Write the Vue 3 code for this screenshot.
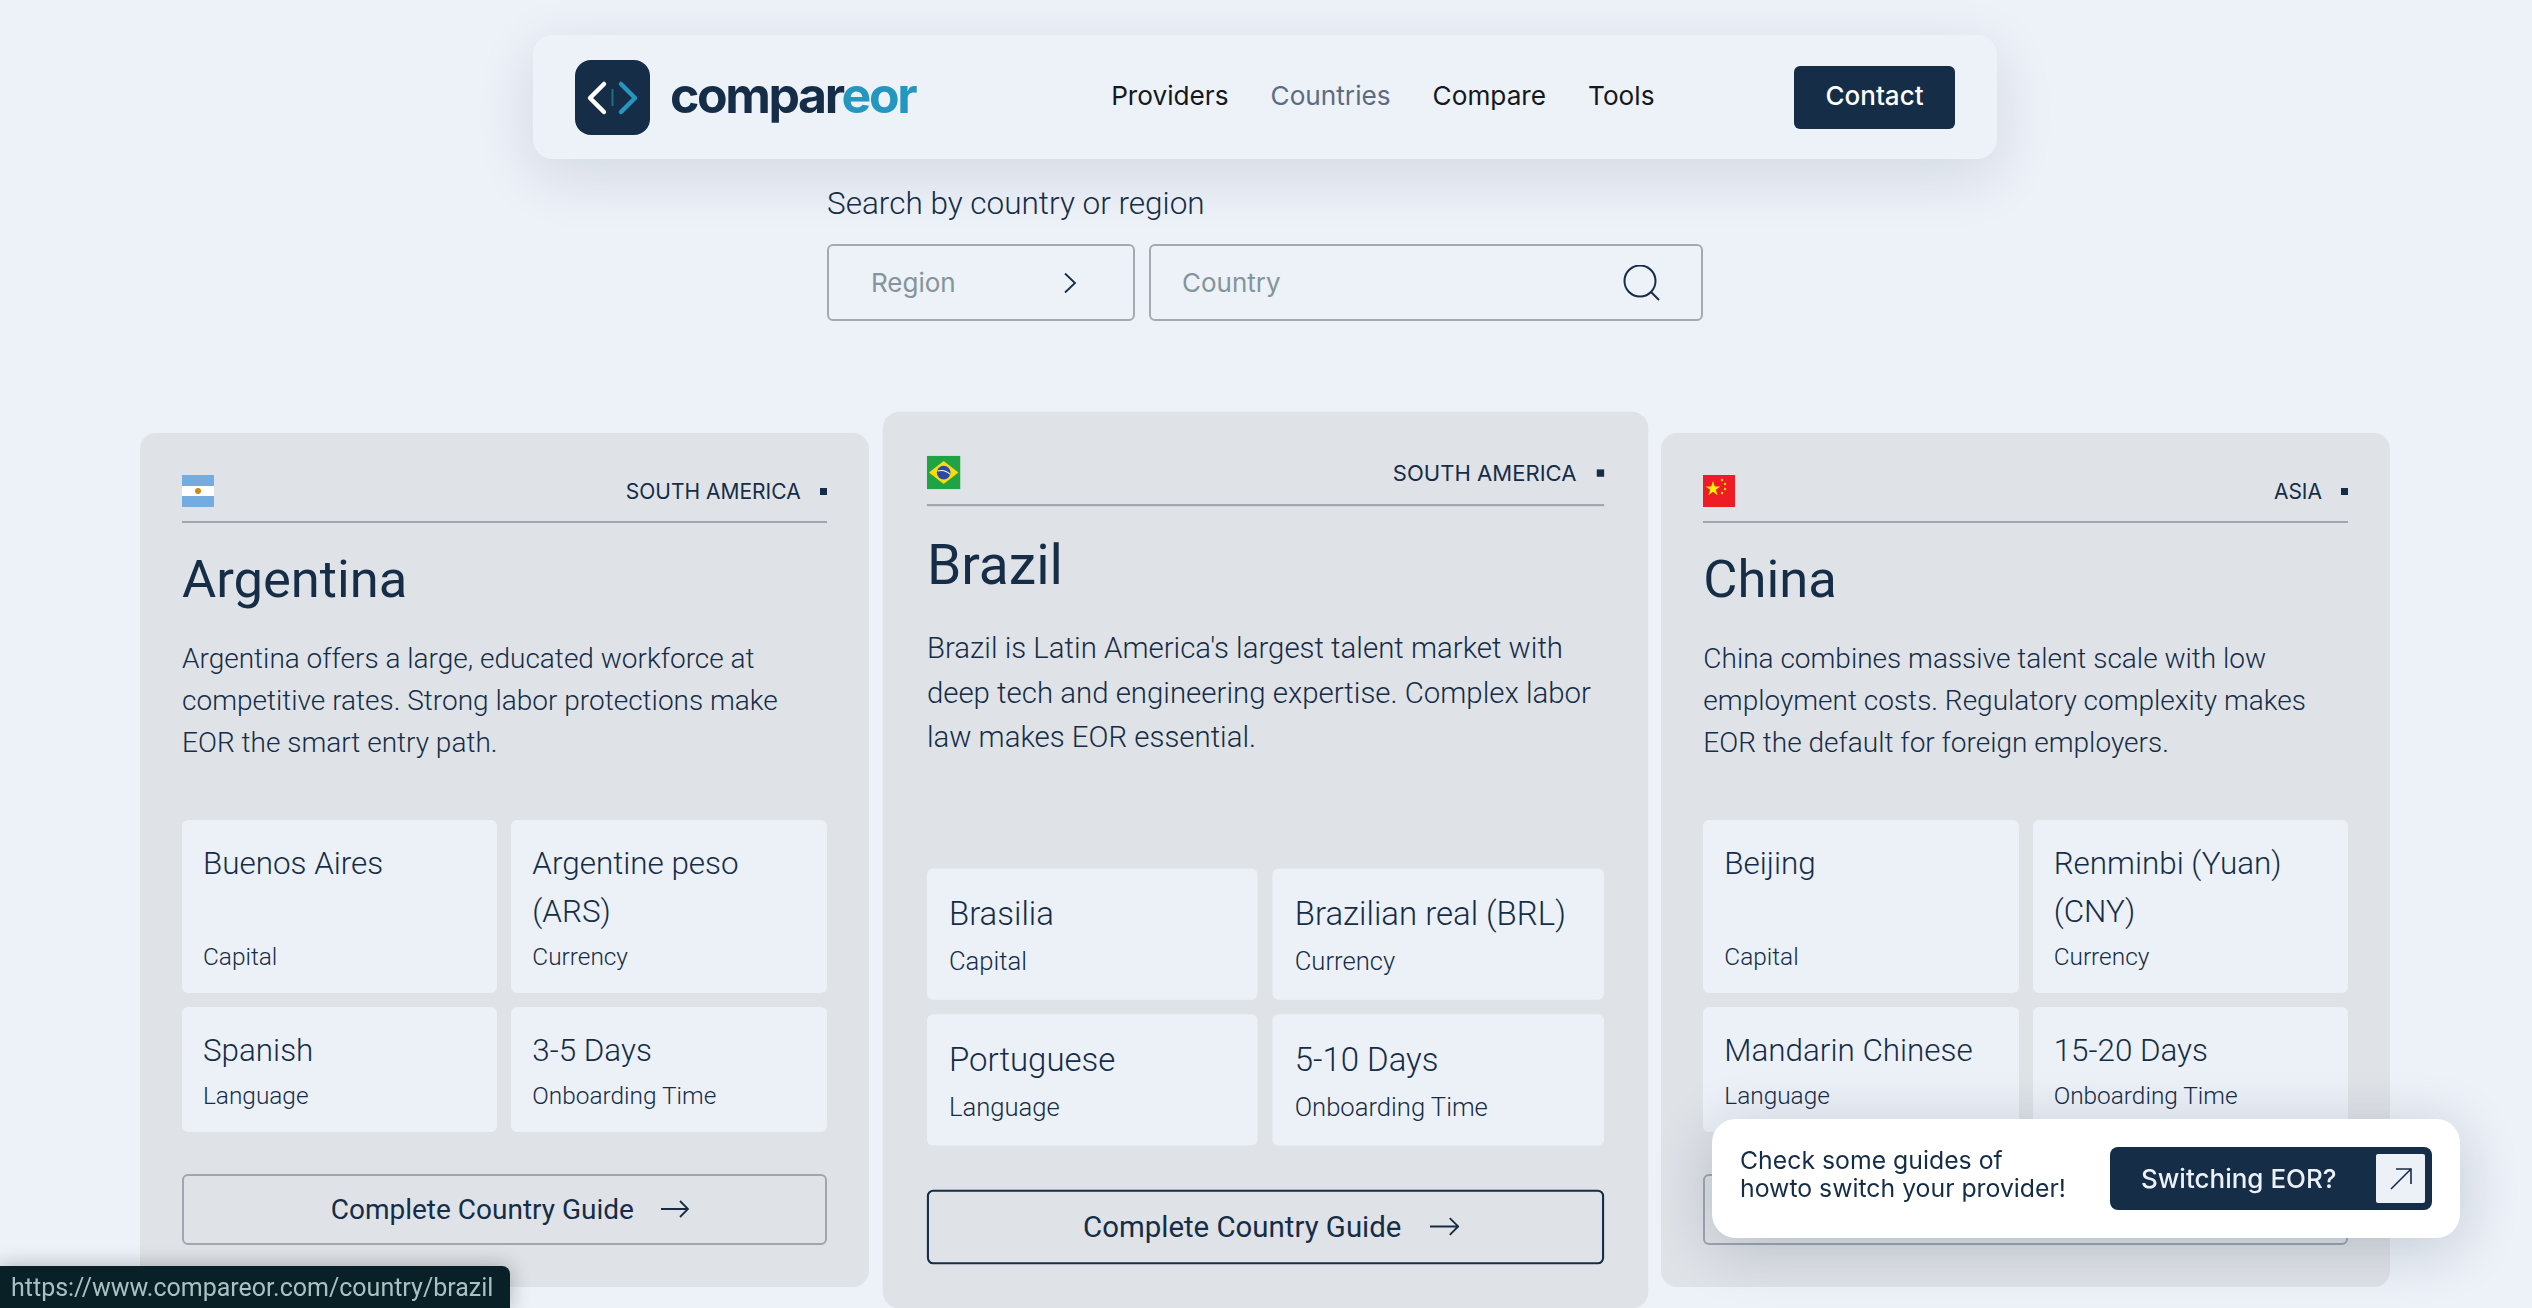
<script setup>
const links = [
  { label: 'Providers' },
  { label: 'Countries', active: true },
  { label: 'Compare' },
  { label: 'Tools' },
]

const countries = [
  {
    name: 'Argentina',
    flag: 'ar',
    region: 'SOUTH AMERICA',
    text: 'Argentina offers a large, educated workforce at competitive rates. Strong labor protections make EOR the smart entry path.',
    stats: [
      ['Buenos Aires', 'Capital'],
      ['Argentine peso (ARS)', 'Currency'],
      ['Spanish', 'Language'],
      ['3-5 Days', 'Onboarding Time'],
    ],
  },
  {
    name: 'Brazil',
    flag: 'br',
    region: 'SOUTH AMERICA',
    hovered: true,
    text: "Brazil is Latin America's largest talent market with deep tech and engineering expertise. Complex labor law makes EOR essential.",
    stats: [
      ['Brasilia', 'Capital'],
      ['Brazilian real (BRL)', 'Currency'],
      ['Portuguese', 'Language'],
      ['5-10 Days', 'Onboarding Time'],
    ],
  },
  {
    name: 'China',
    flag: 'cn',
    region: 'ASIA',
    text: 'China combines massive talent scale with low employment costs. Regulatory complexity makes EOR the default for foreign employers.',
    stats: [
      ['Beijing', 'Capital'],
      ['Renminbi (Yuan) (CNY)', 'Currency'],
      ['Mandarin Chinese', 'Language'],
      ['15-20 Days', 'Onboarding Time'],
    ],
  },
]
</script>

<template>
  <div class="page">
    <header class="navbar">
      <a class="logo">
        <svg class="logo-mark" viewBox="0 0 75 75" width="75" height="75">
          <rect width="75" height="75" rx="16" fill="#152d47" />
          <path d="M29 24 15 38l14 14" fill="none" stroke="#fff" stroke-width="4.5" stroke-linecap="round" stroke-linejoin="round" />
          <path d="M46 24l14 14-14 14" fill="none" stroke="#2596be" stroke-width="4.5" stroke-linecap="round" stroke-linejoin="round" />
          <path d="M37.5 29v17" stroke="#1d6d91" stroke-width="2" />
        </svg>
        <span class="logo-text">compar<span class="logo-accent">eor</span></span>
      </a>
      <nav class="nav-links">
        <a v-for="link in links" :key="link.label" :class="{ active: link.active }">{{ link.label }}</a>
      </nav>
      <button class="contact">Contact</button>
    </header>

    <section class="search">
      <div class="search-label">Search by country or region</div>
      <div class="search-row">
        <div class="field region">
          <span>Region</span>
          <svg viewBox="0 0 14 22" width="14" height="22" fill="none" stroke="#152d47" stroke-width="1.8">
            <path d="M2 1.5 12 11 2 20.5" />
          </svg>
        </div>
        <div class="field country">
          <span>Country</span>
          <svg viewBox="0 0 38 36" width="38" height="36" fill="none" stroke="#152d47" stroke-width="2">
            <circle cx="17" cy="16" r="15.5" />
            <path d="M28 27l8 8" />
          </svg>
        </div>
      </div>
    </section>

    <main class="cards">
      <article v-for="c in countries" :key="c.name" class="card" :class="{ hovered: c.hovered }">
        <div class="card-head">
          <svg class="flag" viewBox="0 0 32 32" width="32" height="32">
            <template v-if="c.flag === 'ar'">
              <rect width="32" height="32" fill="#74acdf" />
              <rect y="11" width="32" height="10" fill="#fff" />
              <circle cx="16" cy="16" r="3" fill="#c98a1a" />
            </template>
            <template v-else-if="c.flag === 'br'">
              <rect width="32" height="32" fill="#1fa344" />
              <path d="M2 16 16 5l14 11-14 11z" fill="#fcdc04" />
              <circle cx="16" cy="16" r="6.5" fill="#2b4aa8" />
              <path d="M10 14.5c4-1 9 0 12 3" fill="none" stroke="#fff" stroke-width="1" />
            </template>
            <template v-else>
              <rect width="32" height="32" fill="#ee1c25" />
              <path d="M10 6l1.8 5.4h5.6l-4.6 3.3 1.8 5.5-4.6-3.4-4.6 3.4 1.8-5.5-4.6-3.3h5.6z" fill="#ffef00" />
              <circle cx="19" cy="5" r="1.2" fill="#ffdd00" />
              <circle cx="22" cy="9" r="1.2" fill="#ffdd00" />
              <circle cx="22" cy="14" r="1.2" fill="#ffdd00" />
              <circle cx="19" cy="18" r="1.2" fill="#ffdd00" />
            </template>
          </svg>
          <div class="card-region">
            <span>{{ c.region }}</span>
            <i class="dot"></i>
          </div>
        </div>
        <h2 class="card-title">{{ c.name }}</h2>
        <p class="card-text">{{ c.text }}</p>
        <div class="stats">
          <div v-for="s in c.stats" :key="s[1]" class="stat">
            <div class="stat-value">{{ s[0] }}</div>
            <div class="stat-label">{{ s[1] }}</div>
          </div>
        </div>
        <a class="guide">
          <span>Complete Country Guide</span>
          <svg viewBox="0 0 28 18" width="28" height="18" fill="none" stroke="#152d47" stroke-width="1.8">
            <path d="M0 9h27M19 1l8 8-8 8" />
          </svg>
        </a>
      </article>
    </main>

    <aside class="promo">
      <p>Check some guides of<br />howto switch your provider!</p>
      <button class="promo-btn">
        <span>Switching EOR?</span>
        <span class="promo-icon">
          <svg viewBox="0 0 24 24" width="24" height="24" fill="none" stroke="#152d47" stroke-width="1.6">
            <path d="M2 22 22 2M7 2h15v15" />
          </svg>
        </span>
      </button>
    </aside>

    <div class="status">https://www.compareor.com/country/brazil</div>
  </div>
</template>

<style>
html,
body {
  margin: 0;
  background: #edf1f8;
  overflow: hidden;
}
</style>

<style scoped>
.page {
  height: 1308px;
  padding: 35px 2px 0 0;
  box-sizing: border-box;
  color: #152d47;
  font-family: 'Roboto', sans-serif;
  background: #edf1f8;
}
.navbar {
  width: 1464px;
  margin: 0 auto;
  box-sizing: border-box;
  height: 124px;
  padding: 0 42px;
  display: flex;
  align-items: center;
  background: #edf1f8;
  border-radius: 20px;
  box-shadow: 0 16px 60px rgba(21, 45, 71, 0.12);
}
.logo {
  display: flex;
  align-items: center;
  gap: 20px;
}
.logo-text {
  font-family: 'Inter', sans-serif;
  font-weight: 700;
  font-size: 50px;
  letter-spacing: -2.4px;
  line-height: 60px;
  padding-bottom: 4px;
  color: #152d47;
}
.logo-accent {
  color: #2596be;
}
.nav-links {
  margin-left: 196px;
  padding-bottom: 4px;
  display: flex;
  gap: 42px;
  font-family: 'Inter', sans-serif;
  font-size: 26.2px;
  color: #15181c;
}
.nav-links .active {
  color: #5c6c80;
}
.contact {
  margin-left: auto;
  width: 161px;
  height: 63px;
  padding: 0 0 4px;
  border: none;
  border-radius: 6px;
  background: #152d47;
  color: #fff;
  font-family: 'Inter', sans-serif;
  font-weight: 500;
  font-size: 26px;
}
.search {
  width: 876px;
  margin: 27px auto 0;
}
.search-label {
  font-size: 31.5px;
  font-weight: 300;
  line-height: 36px;
}
.search-row {
  display: flex;
  gap: 14px;
  margin-top: 22px;
}
.field {
  height: 77px;
  box-sizing: border-box;
  border: 2px solid #a5a9b3;
  border-radius: 6px;
  display: flex;
  align-items: center;
  justify-content: space-between;
  font-family: 'Inter', sans-serif;
  font-size: 26px;
  color: #83959b;
}
.region {
  width: 308px;
  padding: 0 56px 0 42px;
}
.country {
  width: 554px;
  padding: 0 40px 0 31px;
}
.cards {
  width: 2250px;
  margin: 112px auto 0;
  display: grid;
  grid-template-columns: repeat(3, 1fr);
  gap: 32px;
}
.card {
  display: flex;
  flex-direction: column;
  height: 854px;
  box-sizing: border-box;
  padding: 42px 42px 42.5px;
  background: #dfe2e7;
  border-radius: 16px;
}
.card.hovered {
  transform: scale(1.05);
  z-index: 1;
}
.card-head {
  display: flex;
  justify-content: space-between;
  align-items: center;
  padding-bottom: 14px;
  border-bottom: 2px solid #a0a5af;
}
.flag {
  display: block;
}
.card-region {
  display: flex;
  align-items: center;
  gap: 19px;
  font-family: 'Inter', sans-serif;
  font-size: 21px;
}
.dot {
  width: 7px;
  height: 7px;
  background: #152d47;
}
.card-title {
  margin: 25px 0 0;
  font-size: 52.5px;
  font-weight: 400;
  line-height: 62px;
}
.card-text {
  margin: 28px 0 0;
  flex: 1;
  font-size: 28px;
  font-weight: 300;
  line-height: 42px;
}
.stats {
  display: grid;
  grid-template-columns: 1fr 1fr;
  gap: 14px;
}
.stat {
  display: flex;
  flex-direction: column;
  padding: 20.5px 21px 17.5px;
  background: #ecf0f7;
  border-radius: 6px;
}
.stat-value {
  flex: 1;
  font-size: 31.4px;
  font-weight: 300;
  line-height: 48px;
}
.stat-label {
  margin-top: 3px;
  font-size: 24.4px;
  font-weight: 300;
  line-height: 36px;
}
.guide {
  margin-top: 42px;
  height: 71px;
  box-sizing: border-box;
  padding-left: 11px;
  border: 2px solid #a0a5af;
  border-radius: 6px;
  display: flex;
  align-items: center;
  justify-content: center;
  gap: 27px;
  font-size: 28px;
}
.card.hovered .guide {
  border-color: #152d47;
}
.promo {
  position: fixed;
  right: 72px;
  bottom: 70px;
  z-index: 5;
  width: 748px;
  height: 119px;
  box-sizing: border-box;
  padding: 28px;
  display: flex;
  align-items: center;
  justify-content: space-between;
  background: #fff;
  border-radius: 24px;
  box-shadow: 0 10px 60px rgba(21, 45, 71, 0.2);
}
.promo p {
  margin: 0;
  padding-bottom: 9px;
  font-family: 'Inter', sans-serif;
  font-size: 24.8px;
  line-height: 28px;
}
.promo-btn {
  width: 322px;
  height: 63px;
  padding: 0 7px 0 31px;
  border: none;
  border-radius: 8px;
  background: #152d47;
  color: #ecf0f7;
  display: flex;
  align-items: center;
  justify-content: space-between;
  font-family: 'Inter', sans-serif;
  font-weight: 500;
  font-size: 26px;
}
.promo-icon {
  width: 49px;
  height: 49px;
  display: flex;
  align-items: center;
  justify-content: center;
  background: #ecf0f7;
  border-radius: 2px;
}
.status {
  position: fixed;
  left: 0;
  bottom: 0;
  z-index: 6;
  width: 510px;
  height: 42px;
  box-sizing: border-box;
  padding-left: 11px;
  display: flex;
  align-items: center;
  background: #0a2027;
  border-top-right-radius: 8px;
  color: #a9c1c4;
  font-size: 25px;
  box-shadow: 0 0 20px rgba(10, 32, 39, 0.3);
}
</style>
